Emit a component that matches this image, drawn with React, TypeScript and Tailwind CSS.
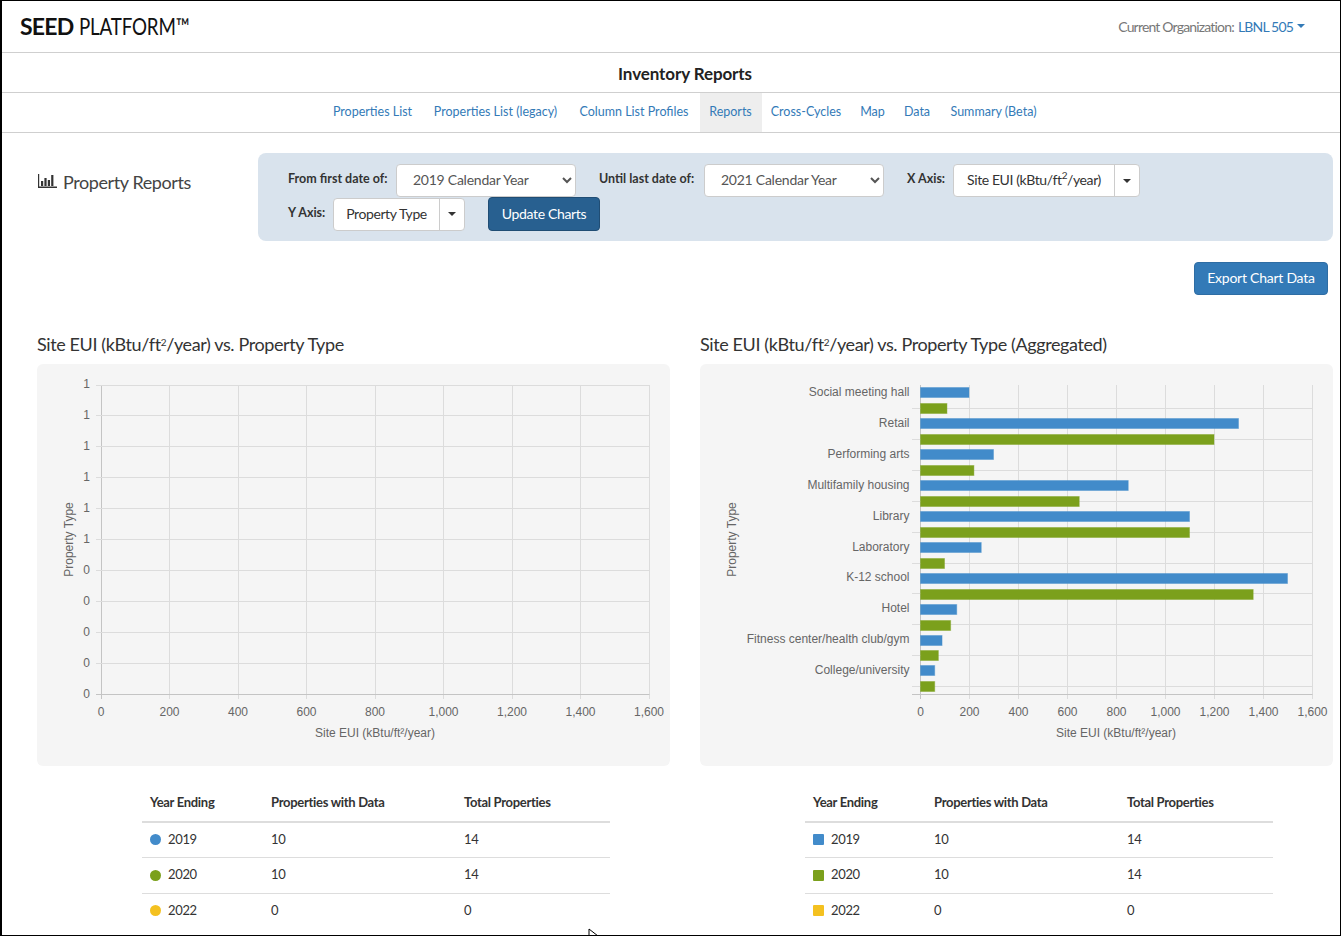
import React from "react";

const ui = { fontFamily: '"Lato", "Liberation Sans", sans-serif' };
const tabs: [string, string][] = [
  ["Properties List", "w-[100px]"],
  ["Properties List (legacy)", "w-[146px]"],
  ["Column List Profiles", "w-[131px]"],
  ["Reports", "w-[62px] bg-[#eeeeee]"],
  ["Cross-Cycles", "w-[89px]"],
  ["Map", "w-[44px]"],
  ["Data", "w-[45px]"],
  ["Summary (Beta)", "w-[108px]"],
];
const BLUE = "#428bca";
const GREEN = "#7ba01c";
const AX = "#666666";
const GRID = "#dcdcdc";
const tickFont = { fontFamily: '"Liberation Sans", Arial, sans-serif', fontSize: 12 };

function Caret() {
  return <span className="w-0 h-0 border-l-[4px] border-r-[4px] border-t-[4px] border-l-transparent border-r-transparent border-t-[#333333]" />;
}

function Split({ label, mainW }: { label: React.ReactNode; mainW: string }) {
  return (
    <div className="flex h-[33px] rounded-[4px] border border-[#cccccc] bg-white text-[14px] text-[#333333]">
      <div className={`${mainW} flex items-center justify-center border-r border-[#cccccc] tracking-[-0.4px] pb-[2px]`}>{label}</div>
      <div className="flex-1 flex items-center justify-center"><Caret /></div>
    </div>
  );
}

function Sel({ value }: { value: string }) {
  return (
    <select defaultValue={value} className="w-[180px] h-[33px] rounded-[4px] border border-[#cccccc] bg-white pl-[12px] pb-[2px] text-[14px] tracking-[-0.25px] text-[#555555]" style={ui}>
      <option>{value}</option>
    </select>
  );
}

function Label({ children }: { children: React.ReactNode }) {
  return <span className="text-[12.5px] font-bold text-[#333333] whitespace-nowrap">{children}</span>;
}

const EUI = <>Site EUI (kBtu/ft<sup className="text-[10px] leading-none">2</sup>/year)</>;

function XTicks({ x0, step, y }: { x0: number; step: number; y: number }) {
  return (
    <>
      {[0, 200, 400, 600, 800, 1000, 1200, 1400, 1600].map((v, i) => (
        <text key={v} x={x0 + i * step} y={y} textAnchor="middle" fill={AX} style={tickFont}>{v.toLocaleString("en-US")}</text>
      ))}
    </>
  );
}

function LeftChart() {
  const xs = Array.from({ length: 9 }, (_, i) => Math.floor(101 + i * 68.5) + 0.5);
  const ys = [385, 415, 446, 477, 508, 539, 570, 601, 632, 663, 694];
  const labels = ["1", "1", "1", "1", "1", "1", "0", "0", "0", "0", "0"];
  return (
    <svg viewBox="37 364 633 402" className="w-[633px] h-[402px] block">
      {xs.map((x, i) => (
        <line key={x} x1={x} x2={x} y1={385} y2={699} stroke={i === 0 ? "#c4c4c4" : GRID} />
      ))}
      {ys.map((y, i) => (
        <line key={y} x1={96} x2={649.5} y1={y + 0.5} y2={y + 0.5} stroke={i === 10 ? "#c4c4c4" : GRID} />
      ))}
      {ys.map((y, i) => (
        <text key={y} x={90} y={388 + i * 31} textAnchor="end" fill={AX} style={tickFont}>{labels[i]}</text>
      ))}
      <XTicks x0={101} step={68.5} y={716} />
      <text x={375} y={737} textAnchor="middle" fill={AX} style={tickFont}>Site EUI (kBtu/ft²/year)</text>
      <text transform="translate(73 539.5) rotate(-90)" textAnchor="middle" fill={AX} style={tickFont}>Property Type</text>
    </svg>
  );
}

const cats: [string, number, number][] = [
  ["Social meeting hall", 200, 110],
  ["Retail", 1300, 1200],
  ["Performing arts", 300, 220],
  ["Multifamily housing", 850, 650],
  ["Library", 1100, 1100],
  ["Laboratory", 250, 100],
  ["K-12 school", 1500, 1360],
  ["Hotel", 150, 125],
  ["Fitness center/health club/gym", 90, 75],
  ["College/university", 60, 60],
];

function RightChart() {
  const x0 = 920.5;
  const step = 49;
  const k = 0.245;
  return (
    <svg viewBox="700 364 633 402" className="w-[633px] h-[402px] block">
      {Array.from({ length: 9 }, (_, i) => (
        <line key={i} x1={x0 + i * step} x2={x0 + i * step} y1={385} y2={699} stroke={i === 0 ? "#c4c4c4" : GRID} />
      ))}
      {cats.map((_, i) => {
        const y = Math.round(408 + i * 30.9) + 0.5;
        return <line key={i} x1={912} x2={1312.5} y1={y} y2={y} stroke={GRID} />;
      })}
      <line x1={912} x2={1312.5} y1={694.5} y2={694.5} stroke="#c4c4c4" />
      {cats.map(([name, a, b], i) => {
        const yA = Math.round(387.3 + i * 30.9) + 0.5;
        const yB = Math.round(403.2 + i * 30.9) + 0.5;
        return (
          <g key={name}>
            <rect x={x0} y={yA} width={a * k - 0.5} height={10} fill={BLUE} stroke={BLUE} strokeOpacity={0.4} />
            <rect x={x0} y={yB} width={b * k - 0.5} height={10} fill={GREEN} stroke={GREEN} strokeOpacity={0.4} />
            <text x={909.5} y={396 + i * 30.9} textAnchor="end" fill={AX} style={tickFont}>{name}</text>
          </g>
        );
      })}
      <XTicks x0={920.5} step={49} y={716} />
      <text x={1116} y={737} textAnchor="middle" fill={AX} style={tickFont}>Site EUI (kBtu/ft²/year)</text>
      <text transform="translate(736 539.5) rotate(-90)" textAnchor="middle" fill={AX} style={tickFont}>Property Type</text>
    </svg>
  );
}

function Stats({ square }: { square?: boolean }) {
  const rows: [string, string, string, string][] = [
    ["bg-[#428bca]", "2019", "10", "14"],
    ["bg-[#7ba01c]", "2020", "10", "14"],
    ["bg-[#f4c120]", "2022", "0", "0"],
  ];
  return (
    <table className="ml-[105px] mt-[19px] w-[468px] table-fixed border-collapse text-[13px] text-[#333333]">
      <thead>
        <tr className="h-[37px] border-b-2 border-[#dddddd] text-left tracking-[-0.3px]">
          <th className="w-[121px] pl-[8px] font-bold">Year Ending</th>
          <th className="w-[193px] pl-[8px] font-bold">Properties with Data</th>
          <th className="pl-[8px] font-bold">Total Properties</th>
        </tr>
      </thead>
      <tbody className="tracking-[-0.35px]">
        {rows.map(([c, y, a, b], i) => (
          <tr key={y} className={`${i === 1 ? "h-[36px]" : "h-[35px]"} ${i < 2 ? "border-b border-[#dddddd]" : ""}`}>
            <td className="pl-[8px]">
              <span className="flex items-center gap-[7px]">
                <span className={`w-[11px] h-[11px] ${square ? "rounded-[1px]" : "rounded-full"} ${c}`} />
                {y}
              </span>
            </td>
            <td className="pl-[8px]">{a}</td>
            <td className="pl-[8px]">{b}</td>
          </tr>
        ))}
      </tbody>
    </table>
  );
}

export default function App() {
  return (
    <div className="relative w-[1341px] h-[936px] overflow-hidden border border-l-2 border-black bg-white" style={ui}>
      <header className="h-[52px] border-b border-[#cfcfcf] flex items-center justify-between pl-[18px] pr-[35px]">
        <div className="flex text-[23px] text-[#111111] leading-none pb-[1px] whitespace-nowrap">
          <span className="font-bold tracking-[-0.8px] w-[59px]">SEED</span>
          <span className="inline-block origin-left scale-x-[0.815] tracking-[-0.2px]">PLATFORM™</span>
        </div>
        <div className="flex items-center gap-[4px] text-[14px] pb-[1px] tracking-[-0.82px]">
          <span className="text-[#777777]">Current Organization:</span>
          <span className="text-[#337ab7]">LBNL 505</span>
          <span className="w-0 h-0 border-l-[4px] border-r-[4px] border-t-[4px] border-l-transparent border-r-transparent border-t-[#337ab7]" />
        </div>
      </header>
      <div className="h-[40px] border-b border-[#cfcfcf] pl-[28px] pt-[2px] flex items-center justify-center text-[17px] font-bold text-[#222222] tracking-[-0.1px]">
        Inventory Reports
      </div>
      <nav className="h-[40px] border-b border-[#cfcfcf] pl-[28px] flex justify-center text-[12.5px] text-[#337ab7]">
        {tabs.map(([t, c]) => (
          <div key={t} className={`${c} h-full flex items-center justify-center whitespace-nowrap`}>{t}</div>
        ))}
      </nav>
      <main className="pl-[35px] pr-[7px]">
        <div className="flex pt-[20px]">
          <div className="w-[221px] flex items-start gap-[6px] pt-[19px]">
            <svg width="20" height="16" viewBox="0 0 20 16" className="mt-[1px] shrink-0" fill="#333333">
              <path d="M1 1h1.2v12.6H20V15H1z" />
              <rect x="4" y="8" width="2.2" height="5" />
              <rect x="7.4" y="5" width="2.2" height="8" />
              <rect x="10.8" y="7" width="2.2" height="6" />
              <rect x="14.2" y="2" width="2.2" height="11" />
            </svg>
            <span className="text-[18px] text-[#444444] leading-[20px] tracking-[-0.4px] whitespace-nowrap">Property Reports</span>
          </div>
          <div className="w-[1075px] h-[88px] rounded-[8px] bg-[#d9e3ed] pl-[30px] pt-[11px]">
            <div className="flex items-center h-[33px]">
              <div className="w-[108px] pb-[8px]"><Label>From first date of:</Label></div>
              <Sel value="2019 Calendar Year" />
              <div className="w-[128px] pl-[23px] pb-[8px]"><Label>Until last date of:</Label></div>
              <Sel value="2021 Calendar Year" />
              <div className="w-[69px] pl-[23px] pb-[8px]"><Label>X Axis:</Label></div>
              <div className="w-[187px]"><Split label={EUI} mainW="w-[161px]" /></div>
            </div>
            <div className="flex items-center h-[34px]">
              <div className="w-[45px] pb-[6px]"><Label>Y Axis:</Label></div>
              <div className="w-[132px]"><Split label="Property Type" mainW="w-[106px]" /></div>
              <button className="ml-[23px] w-[112px] h-[34px] pb-[2px] rounded-[4px] border border-[#204d74] bg-[#286090] text-white text-[14px] tracking-[-0.35px]">Update Charts</button>
            </div>
          </div>
        </div>
        <div className="flex justify-end mt-[21px] pr-[5px]">
          <button className="w-[134px] h-[33px] pb-[2px] rounded-[4px] border border-[#2e6da4] bg-[#337ab7] text-white text-[14px] tracking-[-0.25px]">Export Chart Data</button>
        </div>
        <div className="grid grid-cols-[633px_633px] gap-x-[30px] mt-[36px]">
          <div>
            <h3 className="h-[33px] text-[18px] leading-[26px] text-[#333333] tracking-[-0.39px]">{EUI} vs. Property Type</h3>
            <div className="h-[402px] rounded-[6px] bg-[#f5f5f5] overflow-hidden"><LeftChart /></div>
            <Stats />
          </div>
          <div>
            <h3 className="h-[33px] text-[18px] leading-[26px] text-[#333333] tracking-[-0.39px]">{EUI} vs. Property Type (Aggregated)</h3>
            <div className="h-[402px] rounded-[6px] bg-[#f5f5f5] overflow-hidden"><RightChart /></div>
            <Stats square />
          </div>
        </div>
      </main>
      <svg width="10" height="14" viewBox="0 0 10 14" className="absolute left-[586px] top-[927px]">
        <path d="M1 1v11l3-3 2 4 2-1-2-4h4z" fill="#ffffff" stroke="#000000" strokeWidth="1" />
      </svg>
    </div>
  );
}
